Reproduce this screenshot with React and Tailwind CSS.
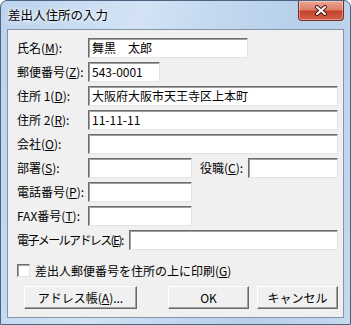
import React from 'react';

const font = { fontFamily: '"MS UI Gothic", "Noto Sans CJK JP", sans-serif' };

// 凹んだ入力欄（Windows クラシック風）
function Field({ w, value }) {
  return (
    <div
      className={`${w} h-[20px] bg-white border border-t-[#6d6d6d] border-l-[#6d6d6d] border-r-[#e3e3e3] border-b-[#e3e3e3] shadow-[inset_1px_1px_0_#a0a0a0] pl-[3px] flex items-center text-[12px] leading-none text-black whitespace-nowrap overflow-hidden`}
    >
      {value}
    </div>
  );
}

function Label({ w, children }) {
  return <div className={`${w} shrink-0 text-[12px] leading-none text-black whitespace-nowrap`}>{children}</div>;
}

function Btn({ w, children }) {
  return (
    <div
      className={`${w} h-[23px] bg-[#f0f0f0] border border-t-white border-l-white border-r-[#696969] border-b-[#696969] shadow-[inset_-1px_-1px_0_#a0a0a0] flex items-center justify-center text-[12px] leading-none text-black`}
    >
      {children}
    </div>
  );
}

export default function App() {
  return (
    <div
      style={font}
      className="relative w-[351px] h-[325px] border border-[#4a6482] rounded-t-[7px] bg-[linear-gradient(100deg,#bcd3ed_0%,#d3e3f5_35%,#c2d8ef_55%,#b7cfea_75%,#c5d9ef_100%)] flex flex-col"
    >
      {/* タイトルバー */}
      <div className="h-[28px] shrink-0 flex items-center pl-[7px] pt-[1px]">
        <span className="text-[12.5px] leading-none text-black [text-shadow:0_0_6px_#ffffff,0_0_3px_#ffffff]">差出人住所の入力</span>
      </div>
      {/* 閉じるボタン */}
      <div className="absolute top-0 right-[6px] w-[46px] h-[20px] rounded-b-[4px] border border-t-0 border-[#7a2f24] bg-[linear-gradient(to_bottom,#e9a796_0%,#dc7f6a_45%,#c5432c_55%,#d0604a_100%)] flex items-center justify-center shadow-[inset_0_0_0_1px_rgba(255,255,255,0.35)]">
        <svg width="14" height="11" viewBox="0 0 14 11">
          <path d="M3 2 L11 9 M11 2 L3 9" stroke="#4a1a14" strokeWidth="4" strokeLinecap="round" />
          <path d="M3 2 L11 9 M11 2 L3 9" stroke="#ffffff" strokeWidth="2" strokeLinecap="round" />
        </svg>
      </div>

      {/* クライアント領域 */}
      <div className="mx-[6px] h-[289px] shrink-0 border border-[#8393a8] bg-[#f0f0f0] pt-[8px] pl-[9px] pr-[5px] flex flex-col">
        <div className="flex flex-col gap-[4px]">
          <div className="flex items-center h-[20px]">
            <Label w="w-[71px]">氏名(<u>M</u>):</Label>
            <Field w="w-[160px]" value="舞黒　太郎" />
          </div>
          <div className="flex items-center h-[20px]">
            <Label w="w-[71px]">郵便番号(<u>Z</u>):</Label>
            <Field w="w-[72px]" value="543-0001" />
          </div>
          <div className="flex items-center h-[20px]">
            <Label w="w-[71px]">住所 1(<u>D</u>):</Label>
            <Field w="flex-1" value="大阪府大阪市天王寺区上本町" />
          </div>
          <div className="flex items-center h-[20px]">
            <Label w="w-[71px]">住所 2(<u>R</u>):</Label>
            <Field w="flex-1" value="11-11-11" />
          </div>
          <div className="flex items-center h-[20px]">
            <Label w="w-[71px]">会社(<u>O</u>):</Label>
            <Field w="flex-1" value="" />
          </div>
          <div className="flex items-center h-[20px]">
            <Label w="w-[71px]">部署(<u>S</u>):</Label>
            <Field w="w-[104px]" value="" />
            <Label w="w-[48px] ml-[8px]">役職(<u>C</u>):</Label>
            <Field w="flex-1" value="" />
          </div>
          <div className="flex items-center h-[20px]">
            <Label w="w-[71px]">電話番号(<u>P</u>):</Label>
            <Field w="w-[104px]" value="" />
          </div>
          <div className="flex items-center h-[20px]">
            <Label w="w-[71px]">FAX番号(<u>T</u>):</Label>
            <Field w="w-[104px]" value="" />
          </div>
          <div className="flex items-center h-[20px]">
            <Label w="w-[112px] tracking-[-1.6px]">電子メールアドレス(<u>E</u>):</Label>
            <Field w="flex-1" value="" />
          </div>
        </div>

        <div className="mt-[14px] h-[13px] flex items-center">
          <div className="w-[13px] h-[13px] bg-white border border-t-[#6d6d6d] border-l-[#6d6d6d] border-r-[#e3e3e3] border-b-[#e3e3e3] shadow-[inset_1px_1px_0_#a0a0a0]" />
          <span className="ml-[5px] text-[12px] leading-none text-black">差出人郵便番号を住所の上に印刷(<u>G</u>)</span>
        </div>

        <div className="mt-[9px] flex items-center">
          <div className="ml-[7px]">
            <Btn w="w-[113px]">アドレス帳(<u>A</u>)...</Btn>
          </div>
          <div className="ml-auto flex gap-[8px]">
            <Btn w="w-[81px]">OK</Btn>
            <Btn w="w-[81px]">キャンセル</Btn>
          </div>
        </div>
      </div>
    </div>
  );
}
